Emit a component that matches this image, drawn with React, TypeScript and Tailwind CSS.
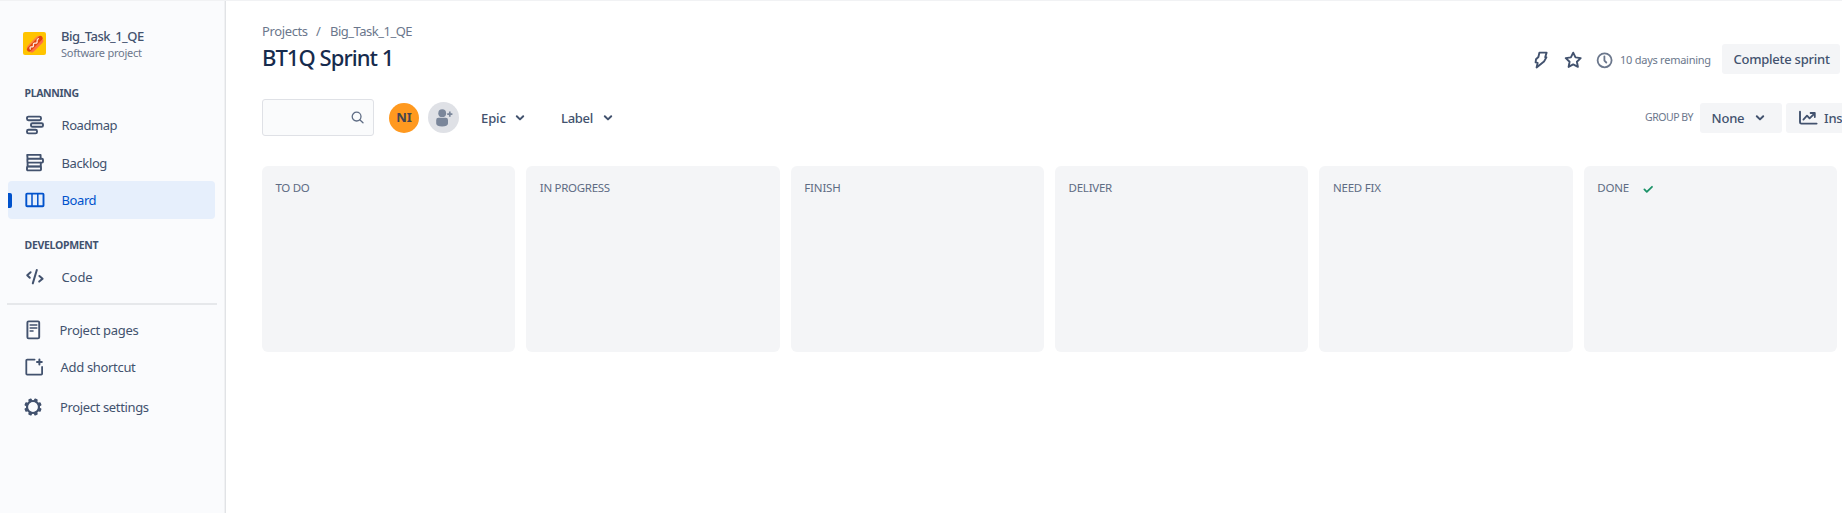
import type { ReactNode } from "react";

function Stroke({ w, h, sw = 2, className = "", children }: { w: number; h: number; sw?: number; className?: string; children: ReactNode }) {
  return (
    <svg
      width={w}
      height={h}
      viewBox={`0 0 ${w} ${h}`}
      fill="none"
      stroke="currentColor"
      strokeWidth={sw}
      strokeLinecap="round"
      strokeLinejoin="round"
      className={`shrink-0 ${className}`}
    >
      {children}
    </svg>
  );
}

const RoadmapIcon = () => (
  <Stroke w={20} h={20} sw={1.9}>
    <rect x="2" y="1.6" width="14" height="3.6" rx="1.4" />
    <rect x="6" y="8.2" width="12" height="3.6" rx="1.4" />
    <rect x="2" y="14.8" width="10" height="3.6" rx="1.4" />
  </Stroke>
);

const BacklogIcon = () => (
  <Stroke w={20} h={20} sw={1.9}>
    <path d="M2.6 5.8 2.2 1.9h13.4v3.6" />
    <rect x="2.4" y="5.8" width="15.6" height="3.8" rx="1" />
    <path d="M2.6 9.8v3.6h13.2V9.8" />
    <rect x="2" y="13.6" width="14" height="3.8" rx="0.8" />
  </Stroke>
);

const BoardIcon = () => (
  <Stroke w={20} h={16} sw={1.9}>
    <rect x="1.3" y="1.6" width="17.2" height="12.6" rx="0.8" />
    <path d="M7 2v12M12.8 2v12" strokeWidth="1.5" />
  </Stroke>
);

const CodeIcon = () => (
  <Stroke w={20} h={18} sw={2}>
    <path d="M5.6 4.2 2.2 7.2l2.6 2.6M11.8 2 7.8 15.4M14.4 8l3.2 2.8-3.4 2.8" />
  </Stroke>
);

const PageIcon = () => (
  <Stroke w={15} h={20} sw={1.9}>
    <rect x="1.4" y="1.4" width="11.8" height="17" rx="1.2" />
    <path d="M4.2 5h6.6M4.2 8h6.6M4.2 11h2.8" strokeWidth="1.6" />
  </Stroke>
);

const ShortcutIcon = () => (
  <Stroke w={19} h={18} sw={1.8}>
    <path d="M9.6 1.6H2.2a.9.9 0 0 0-.9.9v13.3c0 .5.4.9.9.9h14c.5 0 .9-.4.9-.9V9" />
    <path d="M14.4 1.6v4.8M12 4h4.8" strokeWidth="2" />
  </Stroke>
);

const GearIcon = () => (
  <svg width="18" height="18" viewBox="-9 -9 18 18" className="shrink-0" fill="currentColor">
    <circle r="6" fill="none" stroke="currentColor" strokeWidth="2.2" />
    {[22.5, 67.5, 112.5, 157.5, 202.5, 247.5, 292.5, 337.5].map((a) => (
      <rect key={a} x="-1.8" y="-8.7" width="3.6" height="3.4" rx="0.9" transform={`rotate(${a})`} />
    ))}
  </svg>
);

const Chevron = () => (
  <Stroke w={10} h={8} sw={2}>
    <path d="M1.8 2.3 5 5.4l3.2-3.1" />
  </Stroke>
);

const HotDog = () => (
  <svg width="23" height="23" viewBox="0 0 23 23" className="shrink-0">
    <rect width="23" height="23" rx="2" fill="#ffc400" />
    <g transform="rotate(-45 12 12)">
      <rect x="2.4" y="7.8" width="19.2" height="8.6" rx="4" fill="#ff8b3d" />
      <rect x="3.4" y="12.4" width="17" height="4" rx="2" fill="#ff7043" />
      <rect x="1.8" y="9.4" width="20.4" height="4.6" rx="2.3" fill="#e0440f" />
      <path d="M5 12.3q1.3-2.4 2.6-.7t2.6 0 2.6 0 2.6 0 2.8-1" fill="none" stroke="#ffe9dc" strokeWidth="1.3" strokeLinecap="round" />
    </g>
  </svg>
);

function NavItem({ icon, label, track, className, active }: { icon: ReactNode; label: string; track: string; className: string; active?: boolean }) {
  return (
    <div className={`mx-2 flex w-[207px] items-center rounded ${active ? "bg-[#e6effc] text-[#0052cc]" : "text-[#42526e]"} ${className}`}>
      <span className={`h-[15px] w-1 rounded-r-[2px] ${active ? "bg-[#0052cc]" : ""}`} />
      {icon}
      <span className={`text-[13px] leading-[18px] ${track}`}>{label}</span>
    </div>
  );
}

const columns = [
  { name: "TO DO", track: "tracking-[-0.3px]" },
  { name: "IN PROGRESS", track: "tracking-[-0.3px]" },
  { name: "FINISH", track: "tracking-[-0.15px]" },
  { name: "DELIVER", track: "tracking-[-0.25px]" },
  { name: "NEED FIX", track: "tracking-[-0.2px]" },
  { name: "DONE", track: "tracking-[-0.2px]", done: true },
];

function Sidebar() {
  return (
    <aside className="flex w-[226px] shrink-0 flex-col border-r border-[#e1e3e6] bg-[#fafbfd] text-[#42526e] shadow-[inset_-1px_0_0_#f0f1f3]">
      <div className="flex h-[79px] pl-[23px] pt-[26px]">
        <div className="pt-[5px]">
          <HotDog />
        </div>
        <div className="ml-[15px] flex flex-col whitespace-nowrap">
          <span className="text-[13px] font-medium leading-[19px] tracking-[-0.5px]">Big_Task_1_QE</span>
          <span className="text-[11px] leading-[14px] tracking-[-0.25px] text-[#6b778c]">Software project</span>
        </div>
      </div>
      <h2 className="flex h-[26px] items-center pl-[24.5px] pt-0.5 text-[10.5px] font-bold tracking-[-0.35px]">PLANNING</h2>
      <NavItem className="h-[37px]" track="ml-[16.5px] tracking-[-0.45px]" label="Roadmap" icon={<span className="ml-[13px]"><RoadmapIcon /></span>} />
      <NavItem className="mt-px h-[37px]" track="ml-[16.5px] tracking-[-0.38px]" label="Backlog" icon={<span className="ml-[13px]"><BacklogIcon /></span>} />
      <NavItem active className="h-[38px]" track="ml-[16.5px] tracking-[-0.4px]" label="Board" icon={<span className="ml-[13px]"><BoardIcon /></span>} />
      <h2 className="mt-[13px] flex h-[27px] items-center pl-[24.5px] pt-px text-[10.5px] font-bold tracking-[-0.3px]">DEVELOPMENT</h2>
      <NavItem className="-mt-px h-[37px]" track="ml-[16.5px] tracking-[-0.1px]" label="Code" icon={<span className="ml-[13px]"><CodeIcon /></span>} />
      <div className="ml-[7px] mt-2 h-0.5 w-[210px] bg-[#e6e8eb]" />
      <NavItem className="mt-1.5 h-[38px]" track="ml-[18.5px] tracking-[-0.28px]" label="Project pages" icon={<span className="ml-3.5"><PageIcon /></span>} />
      <NavItem className="-mt-px h-[37px]" track="ml-[17px] tracking-[-0.32px]" label="Add shortcut" icon={<span className="ml-[12.5px]"><ShortcutIcon /></span>} />
      <NavItem className="mt-[3px] h-[38px]" track="ml-[18px] tracking-[-0.36px]" label="Project settings" icon={<span className="ml-3"><GearIcon /></span>} />
    </aside>
  );
}

export default function App() {
  return (
    <div className="flex h-[513px] w-full flex-col overflow-hidden bg-white font-['Noto_Sans',sans-serif] [&_svg]:block">
      <div className="h-px shrink-0 bg-[#f1f2f4]" />
      <div className="flex min-h-0 flex-1">
        <Sidebar />
        <main className="flex min-w-0 flex-1 flex-col overflow-hidden whitespace-nowrap pl-9">
          <header className="flex h-[91px] justify-between">
            <div className="pt-[21px]">
              <div className="flex text-[13px] leading-[18px] text-[#6b778c]">
                <span className="w-[54px] tracking-[-0.38px]">Projects</span>
                <span className="w-[14px]">/</span>
                <span className="tracking-[-0.5px]">Big_Task_1_QE</span>
              </div>
              <h1 className="mt-[3px] text-[22px] font-medium leading-7 tracking-[-0.95px] text-[#172b4d]">BT1Q Sprint 1</h1>
            </div>
            <div className="mt-[43px] flex h-[30px] items-center self-start pr-0.5 text-[#42526e]">
              <Stroke w={14} h={18} sw={1.9} className="mt-0.5">
                <path d="M5.4 1.6h7.2l-1.4 4.6h1.2L10 10.6l-7.4 5.9 1.1-4.7-2.1-.5.4-3L4.4 6z" />
              </Stroke>
              <Stroke w={18} h={18} sw={1.9} className="ml-4 mt-0.5">
                <path d="m9.2 1.7 2.3 4.7 5.2.7-3.8 3.6 1 5.2-4.7-2.5-4.6 2.5 1-5.2-3.9-3.6 5.2-.7z" />
              </Stroke>
              <Stroke w={17} h={17} sw={1.8} className="ml-3.5 mt-0.5 text-[#6b778c]">
                <circle cx="8.6" cy="8.3" r="7" />
                <path d="M8.4 4.3v4.3l1.9 1.9" />
              </Stroke>
              <span className="ml-[7px] mt-0.5 w-[102px] text-[11px] tracking-[-0.25px] text-[#6b778c]">10 days remaining</span>
              <button className="h-[30px] w-[118px] rounded-[3px] bg-[#f4f5f7] pl-[11.5px] pt-px text-left text-[13px] font-medium tracking-[-0.25px]">Complete sprint</button>
            </div>
          </header>

          <div className="flex h-[52px] items-center justify-between">
            <div className="flex items-center text-[13px] font-medium text-[#42526e]">
              <div className="-mt-px flex h-[37px] w-28 items-center justify-end rounded-[3px] border border-[#dfe1e6] bg-[#fafbfc] pr-[9px] text-[#5e6c84]">
                <Stroke w={13} h={13} sw={1.3}>
                  <circle cx="5.6" cy="5.6" r="4.4" />
                  <path d="m9 9 3 2.8" />
                </Stroke>
              </div>
              <span className="ml-[15px] flex h-[30px] w-[30px] items-center justify-center rounded-full bg-[#ff991f] text-[13px] font-bold text-[#42444f]">NI</span>
              <span className="ml-[9px] mt-[-1px] flex h-[31px] w-[31px] items-center justify-center rounded-full bg-[#dfe1e6] text-[#7a869a]">
                <svg width="18" height="18" viewBox="0 0 18 18" fill="currentColor">
                  <circle cx="7.2" cy="4.2" r="3.9" />
                  <path d="M1.2 11a2.2 2.2 0 0 1 2.2-2.2h7.4A2.2 2.2 0 0 1 13 11v3.6c0 1.8-2.4 2.9-5.9 2.9s-5.9-1.1-5.9-2.9z" />
                  <path d="M14.8 2.6v5.2M12.2 5.2h5.2" stroke="currentColor" strokeWidth="1.7" />
                </svg>
              </span>
              <span className="ml-[22px] w-[34px] pt-0.5 tracking-[-0.1px]">Epic</span>
              <Chevron />
              <span className="ml-9 w-[42px] pt-0.5 tracking-[-0.3px]">Label</span>
              <Chevron />
            </div>
            <div className="flex items-center text-[13px] font-medium text-[#42526e]">
              <span className="w-[55px] text-[10.5px] font-normal tracking-[-0.48px] text-[#6b778c]">GROUP BY</span>
              <button className="flex h-[30px] w-[82px] items-center rounded-[3px] bg-[#f4f5f7] pl-[11.5px]">
                <span className="w-[43px] pt-0.5 text-left tracking-[-0.2px]">None</span>
                <Chevron />
              </button>
              <button className="ml-1 flex h-[30px] w-[56px] items-center overflow-hidden rounded-l-[3px] bg-[#f4f5f7] pl-3">
                <Stroke w={21} h={16} sw={1.9}>
                  <path d="M2 1.8v10.4c0 .9.5 1.4 1.4 1.4h15.2" />
                  <path d="m5.4 9.6 3.6-4 2.6 2.8 4.8-4.8M12.6 3h4.2v4" strokeWidth="1.8" />
                </Stroke>
                <span className="ml-[5px] pt-0.5 tracking-[-0.2px]">Insights</span>
              </button>
            </div>
          </div>

          <div className="mt-[22px] flex h-[186px] gap-[11.2px] pr-[5px]">
            {columns.map((c) => (
              <section key={c.name} className="flex flex-1 items-start rounded-[6px] bg-[#f4f5f7] pl-[13.5px] pt-[13px] text-[11.5px] leading-[18px] text-[#5e6c84]">
                <h3 className={c.track}>{c.name}</h3>
                {c.done && (
                  <Stroke w={11} h={9} sw={1.8} className="ml-[14px] mt-[6px] text-[#1b9268]">
                    <path d="m1.4 4.4 2.4 2.4 5.2-5" />
                  </Stroke>
                )}
              </section>
            ))}
          </div>
        </main>
      </div>
    </div>
  );
}
